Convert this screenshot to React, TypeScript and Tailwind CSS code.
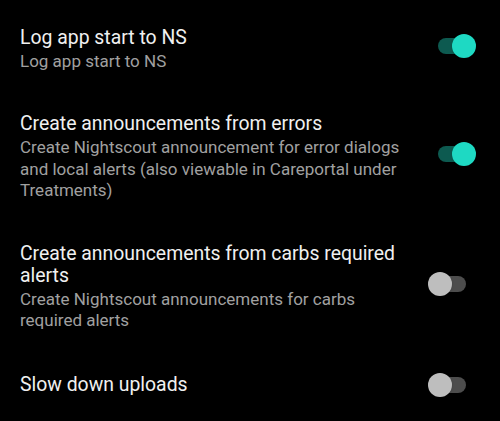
import React from 'react';

type Pref = { title: string; summary?: string; on: boolean };

const prefs: Pref[] = [
  { title: 'Log app start to NS', summary: 'Log app start to NS', on: true },
  {
    title: 'Create announcements from errors',
    summary:
      'Create Nightscout announcement for error dialogs and local alerts (also viewable in Careportal under Treatments)',
    on: true,
  },
  {
    title: 'Create announcements from carbs required alerts',
    summary: 'Create Nightscout announcements for carbs required alerts',
    on: false,
  },
  { title: 'Slow down uploads', on: false },
];

// Material-style switch: short track, thumb overhanging both ends.
const Switch = ({ on, lifted }: { on: boolean; lifted: boolean }) => (
  <div className={`relative w-[48px] h-[24px] shrink-0 ${lifted ? 'mb-[6px]' : ''}`}>
    <div
      className={`absolute left-[10px] top-[4px] w-[28px] h-[16px] rounded-full ${
        on ? 'bg-[#0d5a50]' : 'bg-[#4d4d4d]'
      }`}
    />
    <div
      className={`absolute top-0 w-[24px] h-[24px] rounded-full shadow ${
        on ? 'left-[24px] bg-[#1ed9c3]' : 'left-0 bg-[#bebebe]'
      }`}
    />
  </div>
);

export default function App() {
  return (
    <div
      className="w-[500px] h-[421px] bg-black overflow-hidden pt-[6px]"
      style={{ fontFamily: 'Roboto, "Noto Sans", sans-serif' }}
    >
      {prefs.map((p) => (
        <div key={p.title} className="flex items-center gap-4 pl-5 pr-6 py-[20.5px]">
          <div className="flex-1 min-w-0">
            <div className="text-[19.4px] leading-[22px] text-[#f0f0f0]">{p.title}</div>
            {p.summary && (
              <div className="text-[17px] leading-[21.5px] text-[#a0a0a0] mt-[2px]">{p.summary}</div>
            )}
          </div>
          <Switch on={p.on} lifted={!!p.summary} />
        </div>
      ))}
    </div>
  );
}
